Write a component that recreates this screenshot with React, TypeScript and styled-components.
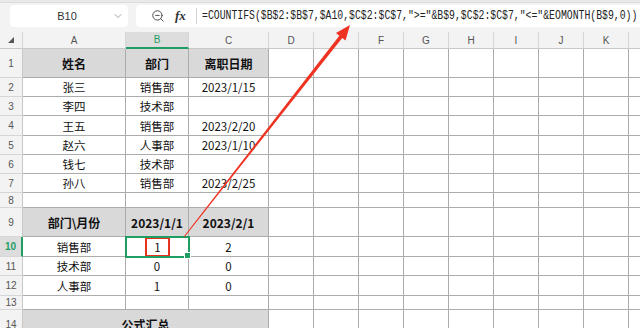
import React from "react";
import styled, { createGlobalStyle } from "styled-components";
import { ZoomOut, ChevronDown } from "lucide-react";

const GlobalStyle = createGlobalStyle`
  html, body {
    margin: 0;
    padding: 0;
    background: #ffffff;
    overflow: hidden;
  }
  * { box-sizing: border-box; }
`;

const GREEN = "#1f9d62";
const GRID = "#acacac";
const FILL = "#d9d9d9";
const CJK = `"Noto Sans CJK SC", "Noto Sans", sans-serif`;

const Page = styled.div`
  position: relative;
  width: 640px;
  height: 328px;
  overflow: hidden;
  font-family: ${CJK};
`;

const TopStrip = styled.div`
  height: 3px;
  background: #e9e9e9;
  border-bottom: 1px solid #dcdcdc;
`;

const Toolbar = styled.div`
  display: flex;
  align-items: center;
  gap: 8px;
  height: 29px;
  padding: 2px 0 5px 10px;
  background: #f3f3f3;
`;

const NameBox = styled.div`
  flex: 0 0 118px;
  height: 22px;
  display: flex;
  align-items: center;
  background: #ffffff;
  border-radius: 4px;
  padding: 0 4px 0 0;
  color: #333;
  font: 11px "Liberation Sans", Arial, sans-serif;
`;

const NameText = styled.span`
  flex: 1;
  text-align: center;
  padding-left: 12px;
`;

const FormulaBar = styled.div`
  flex: 1;
  min-width: 0;
  height: 22px;
  display: flex;
  align-items: center;
  background: #ffffff;
  border-radius: 4px 0 0 4px;
  padding-left: 15px;
  overflow: hidden;

  & > svg {
    flex-shrink: 0;
  }
`;

const Fx = styled.span`
  flex-shrink: 0;
  font: italic 600 13px "Liberation Serif", serif;
  color: #333;
  margin: 0 10px 0 10px;
`;

const Separator = styled.div`
  flex-shrink: 0;
  width: 1px;
  height: 16px;
  background: #d4d4d4;
  margin-right: 5px;
`;

const FormulaText = styled.span`
  flex-shrink: 0;
  display: inline-block;
  white-space: nowrap;
  font: 12px "Liberation Mono", monospace;
  color: #222;
  transform: scaleX(0.817);
  transform-origin: left center;
`;

const Sheet = styled.div`
  display: grid;
  grid-template-columns: 23px 103px 63px 80px repeat(9, 45px);
  grid-template-rows: 17px 29px 19px 19px 20px 19px 19px 19px 15px 29px 20px 19px 20px 14px 29px;
`;

const ColHead = styled.div<{ $active?: boolean }>`
  display: flex;
  align-items: center;
  justify-content: center;
  font: 10px "Liberation Sans", Arial, sans-serif;
  color: ${(p) => (p.$active ? GREEN : "#555")};
  background: ${(p) => (p.$active ? "#dddddd" : "#f3f3f3")};
  border-right: 1px solid #d6d6d6;
  border-bottom: ${(p) => (p.$active ? `2px solid ${GREEN}` : "1px solid #c8c8c8")};
`;

const Corner = styled.div`
  display: flex;
  align-items: center;
  justify-content: center;
  background: #f3f3f3;
  border-bottom: 1px solid #c8c8c8;
  border-right: 1px solid #d6d6d6;
`;

const Triangle = styled.div`
  width: 0;
  height: 0;
  border-left: 6px solid transparent;
  border-bottom: 6px solid #555;
`;

const RowHead = styled.div<{ $active?: boolean }>`
  display: flex;
  align-items: center;
  justify-content: center;
  font: ${(p) => (p.$active ? "bold " : "")}10px "Liberation Sans", Arial, sans-serif;
  color: ${(p) => (p.$active ? GREEN : "#555")};
  background: ${(p) => (p.$active ? "#dddddd" : "#f3f3f3")};
  border-bottom: 1px solid #d6d6d6;
  border-right: ${(p) => (p.$active ? `2px solid ${GREEN}` : "1px solid #c8c8c8")};
`;

const Cell = styled.div<{ $fill?: boolean; $bold?: boolean; $span?: number; $selected?: boolean }>`
  position: relative;
  display: flex;
  align-items: center;
  justify-content: center;
  font-size: ${(p) => (p.$bold ? "12px" : "11.5px")};
  font-weight: ${(p) => (p.$bold ? 700 : 400)};
  color: #111;
  white-space: nowrap;
  background: ${(p) => (p.$fill ? FILL : "#ffffff")};
  border-right: 1px solid ${GRID};
  border-bottom: 1px solid ${GRID};
  ${(p) => (p.$span ? `grid-column: span ${p.$span};` : "")}
  ${(p) =>
    p.$selected
      ? `
    outline: 2px solid ${GREEN};
    outline-offset: -1px;
    z-index: 2;
    &::after {
      content: "";
      position: absolute;
      right: -3px;
      bottom: -3px;
      width: 5px;
      height: 5px;
      background: ${GREEN};
      border: 1px solid #fff;
    }
  `
      : ""}
`;

const Highlight = styled.span`
  display: inline-flex;
  align-items: center;
  justify-content: center;
  width: 25px;
  height: 20px;
  border: 2px solid #e8321f;
  margin-left: 1px;
`;

const ArrowLayer = styled.svg`
  position: absolute;
  left: 0;
  top: 0;
  pointer-events: none;
  z-index: 5;
`;

const columns = ["A", "B", "C", "D", "E", "F", "G", "H", "I", "J", "K", "L"];
const hiddenLetters = ["E", "L"];

type Row = { cells: string[]; fill?: boolean; bold?: boolean; merged?: boolean };

const rows: Row[] = [
  { cells: ["姓名", "部门", "离职日期"], fill: true, bold: true },
  { cells: ["张三", "销售部", "2023/1/15"] },
  { cells: ["李四", "技术部", ""] },
  { cells: ["王五", "销售部", "2023/2/20"] },
  { cells: ["赵六", "人事部", "2023/1/10"] },
  { cells: ["钱七", "技术部", ""] },
  { cells: ["孙八", "销售部", "2023/2/25"] },
  { cells: ["", "", ""] },
  { cells: ["部门\\月份", "2023/1/1", "2023/2/1"], fill: true, bold: true },
  { cells: ["销售部", "1", "2"] },
  { cells: ["技术部", "0", "0"] },
  { cells: ["人事部", "1", "0"] },
  { cells: ["", "", ""] },
  { cells: ["公式汇总"], fill: true, bold: true, merged: true },
];

const formula =
  '=COUNTIFS($B$2:$B$7,$A10,$C$2:$C$7,">="&B$9,$C$2:$C$7,"<="&EOMONTH(B$9,0))';

function arrowPoints() {
  const start = { x: 184, y: 237 };
  const tip = { x: 350, y: 25 };
  const dx = tip.x - start.x;
  const dy = tip.y - start.y;
  const len = Math.hypot(dx, dy);
  const u = { x: dx / len, y: dy / len };
  const n = { x: -u.y, y: u.x };
  const headLen = 15;
  const headHalf = 6;
  const base = { x: tip.x - u.x * headLen, y: tip.y - u.y * headLen };
  const w0 = 0.5;
  const w1 = 1.8;
  const pts = [
    [start.x + n.x * w0, start.y + n.y * w0],
    [base.x + n.x * w1, base.y + n.y * w1],
    [base.x + n.x * headHalf, base.y + n.y * headHalf],
    [tip.x, tip.y],
    [base.x - n.x * headHalf, base.y - n.y * headHalf],
    [base.x - n.x * w1, base.y - n.y * w1],
    [start.x - n.x * w0, start.y - n.y * w0],
  ];
  return pts.map((p) => p.map((v) => v.toFixed(1)).join(",")).join(" ");
}

export default function App() {
  return (
    <Page>
      <GlobalStyle />
      <TopStrip />
      <Toolbar>
        <NameBox>
          <NameText>B10</NameText>
          <ChevronDown size={12} color="#888" strokeWidth={1.5} />
        </NameBox>
        <FormulaBar>
          <ZoomOut size={14} color="#444" strokeWidth={1.6} />
          <Fx>fx</Fx>
          <Separator />
          <FormulaText>{formula}</FormulaText>
        </FormulaBar>
      </Toolbar>
      <Sheet>
        <Corner>
          <Triangle />
        </Corner>
        {columns.map((c) => (
          <ColHead key={c} $active={c === "B"}>
            {hiddenLetters.includes(c) ? "" : c}
          </ColHead>
        ))}
        {rows.map((row, i) => {
          const rowNo = i + 1;
          return (
            <React.Fragment key={rowNo}>
              <RowHead $active={rowNo === 10}>{rowNo}</RowHead>
              {row.merged ? (
                <Cell $fill $bold $span={3}>
                  {row.cells[0]}
                </Cell>
              ) : (
                row.cells.map((text, j) => (
                  <Cell
                    key={j}
                    $fill={row.fill}
                    $bold={row.bold}
                    $selected={rowNo === 10 && j === 1}
                  >
                    {rowNo === 10 && j === 1 ? <Highlight>{text}</Highlight> : text}
                  </Cell>
                ))
              )}
              {columns.slice(3).map((c) => (
                <Cell key={c} />
              ))}
            </React.Fragment>
          );
        })}
      </Sheet>
      <ArrowLayer width={640} height={328} viewBox="0 0 640 328">
        <polygon points={arrowPoints()} fill="#ee3322" />
      </ArrowLayer>
    </Page>
  );
}
